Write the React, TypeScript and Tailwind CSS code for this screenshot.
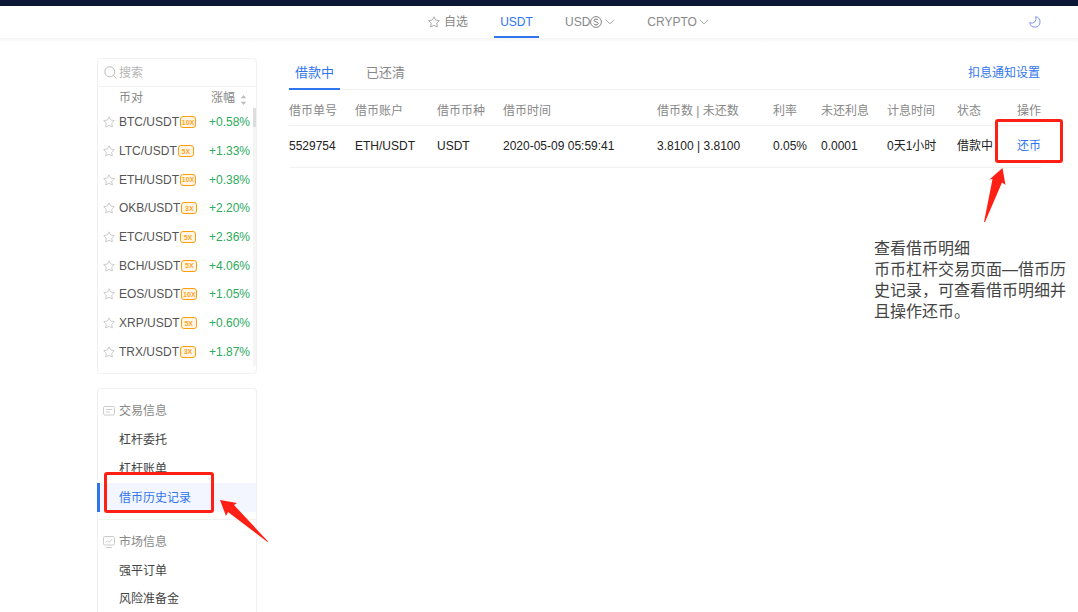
import { useState } from "react";

const pairs = [
  { name: "BTC/USDT", leverage: "10X", change: "+0.58%" },
  { name: "LTC/USDT", leverage: "5X", change: "+1.33%" },
  { name: "ETH/USDT", leverage: "10X", change: "+0.38%" },
  { name: "OKB/USDT", leverage: "3X", change: "+2.20%" },
  { name: "ETC/USDT", leverage: "5X", change: "+2.36%" },
  { name: "BCH/USDT", leverage: "5X", change: "+4.06%" },
  { name: "EOS/USDT", leverage: "10X", change: "+1.05%" },
  { name: "XRP/USDT", leverage: "5X", change: "+0.60%" },
  { name: "TRX/USDT", leverage: "3X", change: "+1.87%" },
];

const columns = [
  { title: "借币单号", width: "w-[66px]" },
  { title: "借币账户", width: "w-[82px]" },
  { title: "借币币种", width: "w-[66px]" },
  { title: "借币时间", width: "w-[154px]" },
  { title: "借币数 | 未还数", width: "w-[116px]" },
  { title: "利率", width: "w-[48px]" },
  { title: "未还利息", width: "w-[66px]" },
  { title: "计息时间", width: "w-[70px]" },
  { title: "状态", width: "w-[44px]" },
];

const loan = ["5529754", "ETH/USDT", "USDT", "2020-05-09 05:59:41", "3.8100 | 3.8100", "0.05%", "0.0001", "0天1小时", "借款中"];

function StarIcon() {
  return (
    <svg viewBox="0 0 12 12" className="size-3 shrink-0" fill="none" stroke="currentColor" strokeLinejoin="round">
      <path d="M6 .8 7.6 4l3.7.6-2.6 2.6.6 3.8L6 9.3 2.7 11l.6-3.8L.7 4.6 4.4 4z" />
    </svg>
  );
}

function ChevronIcon() {
  return (
    <svg viewBox="0 0 10 6" className="h-1.5 w-2.5" fill="none" stroke="#aaa">
      <path d="m.8.8 4.2 4 4.2-4" />
    </svg>
  );
}

function DollarCoinIcon() {
  return (
    <svg viewBox="0 0 12 12" className="size-3" fill="none" stroke="#777">
      <circle cx="6" cy="6" r="5.4" strokeWidth=".9" />
      <path d="M8.2 4.2C7.9 2.7 4 2.6 4 4.3 4 6.2 8.2 5.6 8.2 7.6 8.2 9.4 4 9.3 3.8 7.6" />
    </svg>
  );
}

function MoonIcon() {
  return (
    <svg viewBox="0 0 12 12" className="size-3" fill="none" stroke="#7f96ef" strokeLinejoin="round">
      <path d="M6.5.7A4.3 4.3 0 0 1 .7 6.6 5.2 5.2 0 1 0 6.5.7z" />
    </svg>
  );
}

function MessageIcon() {
  return (
    <svg viewBox="0 0 12 12" className="size-3" fill="none" stroke="#ccc">
      <rect x=".5" y="1.5" width="11" height="8.5" rx="1.2" />
      <path d="M3 4.5h6M3 7h4" />
    </svg>
  );
}

function MonitorIcon() {
  return (
    <svg viewBox="0 0 12 12" className="size-3" fill="none" stroke="#ccc">
      <rect x=".5" y=".5" width="11" height="8.5" rx="1.2" />
      <path d="M3 11.5h6M2.7 6.5l2-2 1.6 1.6L9 3.3" />
    </svg>
  );
}

function Nav() {
  return (
    <header className="border-t-6 border-[#0c1735]">
      <nav className="flex h-8 items-stretch justify-between pr-[37px] pl-[428px] text-xs text-[#888]">
        <div className="flex">
          <a href="#fav" className="mr-[26px] flex items-center gap-1">
            <span className="text-[#aaa]"><StarIcon /></span>
            自选
          </a>
          <a href="#usdt" className="mr-[26px] flex w-[45px] items-center justify-center border-b-2 border-[#3075ee] pt-0.5 text-[#3075ee]">
            USDT
          </a>
          <button className="mr-8 flex items-center">
            USD
            <DollarCoinIcon />
            <span className="ml-[3px]"><ChevronIcon /></span>
          </button>
          <button className="flex items-center gap-0.5">
            CRYPTO
            <ChevronIcon />
          </button>
        </div>
        <button aria-label="夜间模式">
          <MoonIcon />
        </button>
      </nav>
      <div className="h-1 bg-linear-to-b from-[#f4f4f4] to-white" />
    </header>
  );
}

function PairList() {
  return (
    <section className="flex flex-col rounded-sm border border-[#f1f1f1] pb-[7px] text-xs">
      <label className="flex h-7 items-center gap-0.5 border-b border-[#f1f1f1] pl-1.5">
        <svg viewBox="0 0 13 13" className="size-[13px] shrink-0" fill="none" stroke="#bbb">
          <circle cx="5.8" cy="5.8" r="5" />
          <path d="m9.5 9.5 3 3" />
        </svg>
        <input aria-label="搜索" placeholder="搜索" className="w-full min-w-0 outline-none placeholder:text-[#b5b5b5]" />
      </label>
      <div className="flex h-[21px] items-center justify-between pr-[9px] pl-[21px] text-[#888]">
        <span>币对</span>
        <button className="flex items-center gap-[5px]">
          涨幅
          <svg viewBox="0 0 7 12" className="mt-1 h-3 w-[7px]" fill="#bbb">
            <path d="M3.5 1 6.2 4.2H.8zM3.5 11 .8 7.8h5.4z" />
          </svg>
        </button>
      </div>
      <div className="flex h-[258px]">
        <ul className="flex flex-1 flex-col">
          {pairs.map((pair) => (
            <li key={pair.name} className="flex flex-1 items-center pr-[3px] pl-[5px]">
              <button aria-label={"收藏 " + pair.name} className="mr-1 text-[#ccc]">
                <StarIcon />
              </button>
              <span className="text-[#555]">{pair.name}</span>
              <span className="ml-px flex h-3 w-4 items-center justify-center rounded-[3px] border border-[#ff9d0a] bg-[#fff6e8] text-[7px] leading-none font-bold text-[#ffa51f]">
                {pair.leverage}
              </span>
              <span className="ml-auto text-[#2eaa5c]">{pair.change}</span>
            </li>
          ))}
        </ul>
        <div className="w-[3px] bg-[#f5f5f5]">
          <div className="h-[19px] bg-[#ddd]" />
        </div>
      </div>
    </section>
  );
}

function SideMenu() {
  return (
    <section className="mt-3.5 flex-1 rounded-t-sm border border-b-0 border-[#f1f1f1] pt-2 text-xs text-[#444]">
      <h2 className="flex h-7 items-center gap-1 pl-[5px] text-[#888]">
        <MessageIcon />
        交易信息
      </h2>
      <a href="#orders" className="flex h-[29px] items-center pl-[21px]">杠杆委托</a>
      <a href="#bills" className="flex h-[29px] items-center pl-[21px]">杠杆账单</a>
      <div className="relative">
        <a href="#history" className="-ml-px flex h-[29px] items-center border-l-3 border-[#3075ee] bg-[#f3f6fe] pl-[19px] text-[#3075ee]">
          借币历史记录
        </a>
        <div className="absolute -top-[11px] left-1.5 h-[41px] w-[110px] rounded-[3px] border-3 border-[#ff2015]" />
        <svg viewBox="0 0 50 45" className="absolute top-4 left-[121px] h-[45px] w-[50px]" fill="#ff2015">
          <path d="M1 1 18 4 15 6 49 42.5 48.5 43 9 13 7 17z" />
        </svg>
      </div>
      <div className="mt-[7px] border-t border-[#f1f1f1] pt-2">
        <h2 className="flex h-7 items-center gap-1 pl-[5px] text-[#888]">
          <MonitorIcon />
          市场信息
        </h2>
        <a href="#liquidation" className="flex h-[29px] items-center pl-[21px]">强平订单</a>
        <a href="#reserve" className="flex h-7 items-center pl-[21px]">风险准备金</a>
      </div>
    </section>
  );
}

function LoanTable() {
  return (
    <table className="w-full table-fixed text-left text-xs whitespace-nowrap">
      <thead className="text-[#888]">
        <tr className="h-[35px] border-b border-[#f1f1f1]">
          {columns.map((col) => (
            <th key={col.title} className={"pt-2 font-normal " + col.width}>{col.title}</th>
          ))}
          <th className="w-10 pt-2 text-right font-normal">操作</th>
        </tr>
      </thead>
      <tbody className="text-[#222]">
        <tr className="h-[42px] border-b border-[#f1f1f1]">
          {loan.map((value, i) => (
            <td key={columns[i].title}>{value}</td>
          ))}
          <td className="relative text-right">
            <button className="text-[#3075ee]">还币</button>
            <div className="absolute -top-[7px] -right-[22px] h-11 w-[68px] rounded-[3px] border-3 border-[#ff2015]" />
            <svg viewBox="0 0 22 54" className="absolute top-[42px] right-[35px] h-[54px] w-[22px]" fill="#ff2015">
              <path d="M18.5 0 21.5 17 18 14.5 1 54H0L8.5 11 5.5 11.5z" />
            </svg>
          </td>
        </tr>
      </tbody>
    </table>
  );
}

export default function App() {
  const [tab, setTab] = useState("借款中");

  return (
    <div className="flex min-h-screen flex-col bg-white font-['Liberation_Sans','Noto_Sans_CJK_SC',sans-serif]">
      <Nav />
      <div className="flex flex-1 gap-8 pr-[38px] pl-[97px]">
        <aside className="mt-4 flex w-40 shrink-0 flex-col">
          <PairList />
          <SideMenu />
        </aside>
        <main className="mt-4 min-w-0 flex-1">
          <div className="flex h-8 justify-between border-b border-[#f1f1f1]">
            <div className="flex gap-5 text-[13px]">
              {["借款中", "已还清"].map((name) => (
                <button
                  key={name}
                  onClick={() => setTab(name)}
                  className={
                    "-mb-px border-b-2 px-1.5 " +
                    (tab === name ? "border-[#3075ee] text-[#3075ee]" : "border-transparent text-[#888]")
                  }
                >
                  {name}
                </button>
              ))}
            </div>
            <button className="pb-0.5 text-xs text-[#3075ee]">扣息通知设置</button>
          </div>
          <LoanTable />
          <div className="mt-[70px] -mr-[28px] ml-auto w-[194px] text-base leading-[21px] text-[#444]">
            <p>查看借币明细</p>
            <p>币币杠杆交易页面—借币历史记录，可查看借币明细并且操作还币。</p>
          </div>
        </main>
      </div>
    </div>
  );
}
